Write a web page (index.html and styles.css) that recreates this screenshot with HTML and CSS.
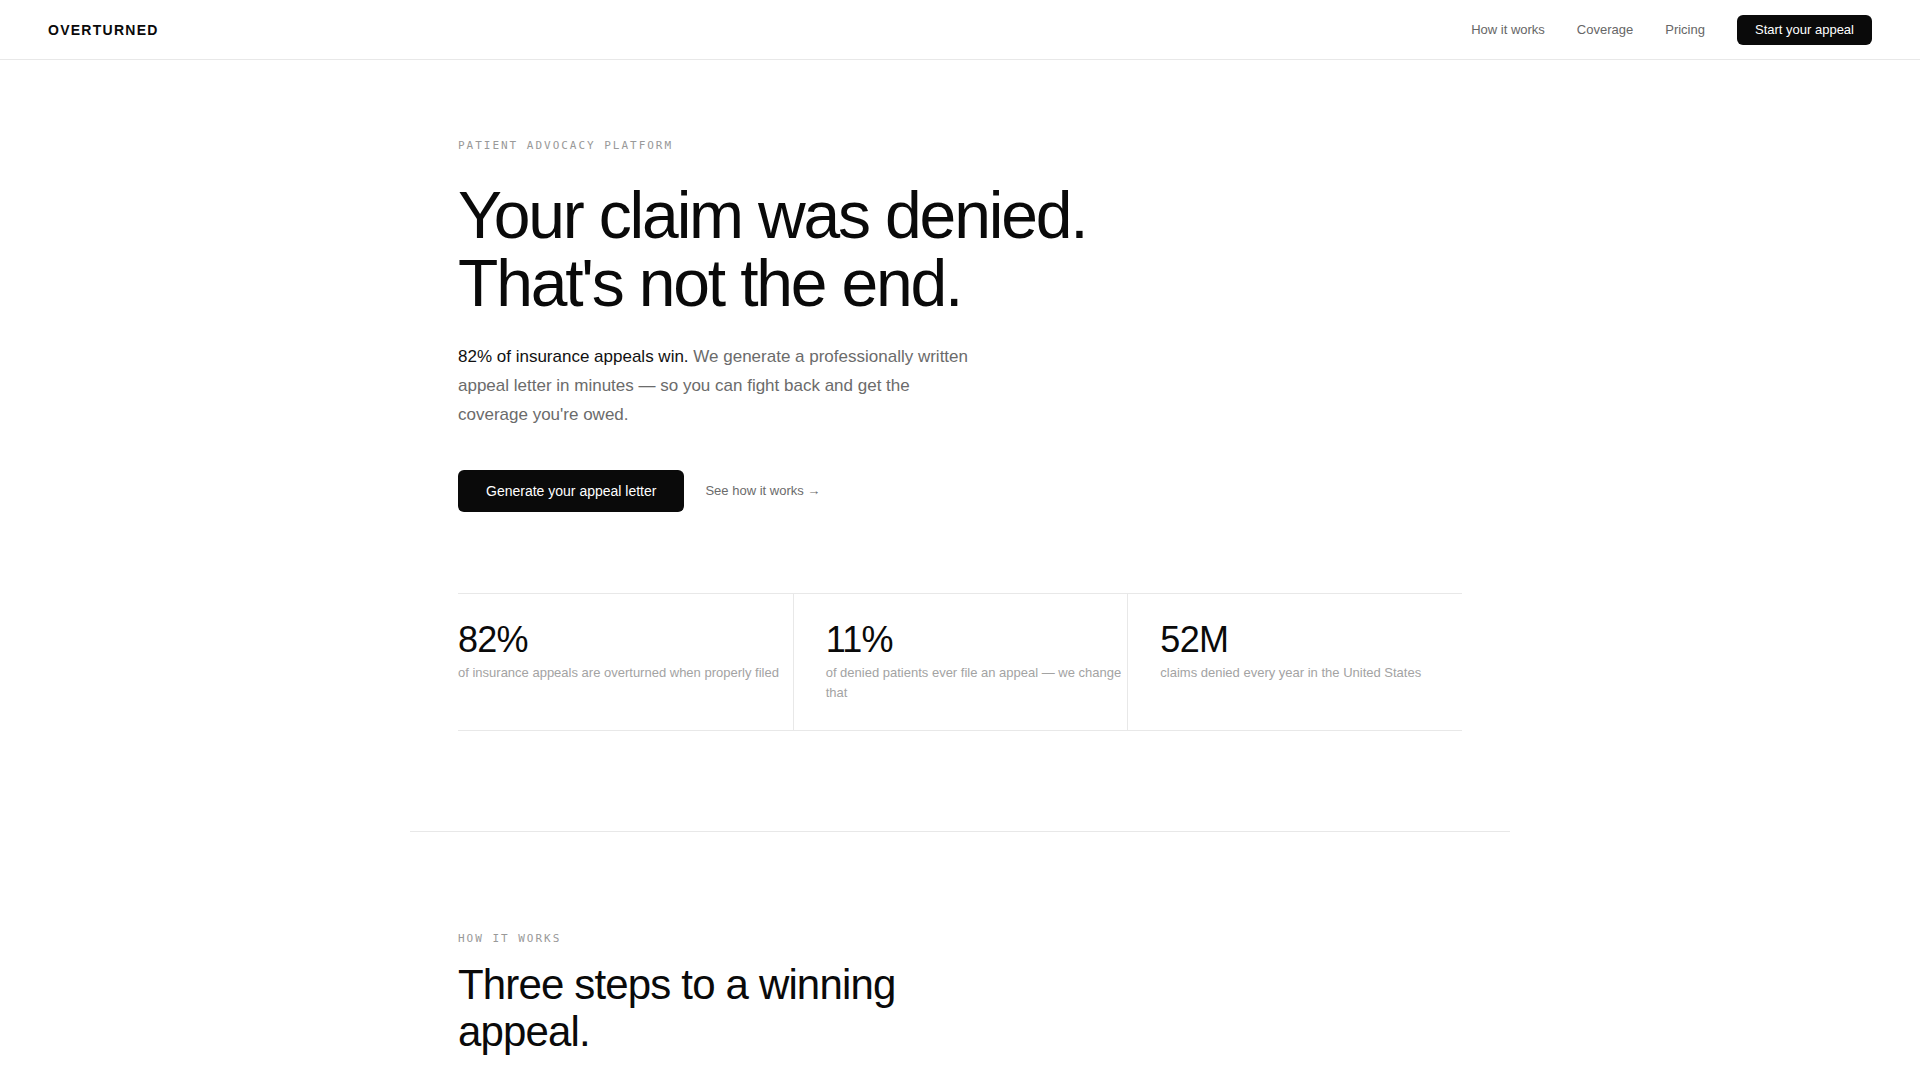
FILE: index.html
```html
<!DOCTYPE html>
<html lang="en">
<head>
<meta charset="utf-8">
<title>Overturned — Patient advocacy platform</title>
<link rel="stylesheet" href="styles.css">
</head>
<body>
<header class="nav">
  <a class="logo" href="#">OVERTURNED</a>
  <nav class="nav-links">
    <a href="#how">How it works</a>
    <a href="#coverage">Coverage</a>
    <a href="#pricing">Pricing</a>
    <a class="nav-cta" href="#start">Start your appeal</a>
  </nav>
</header>

<main>
  <section class="hero">
    <p class="eyebrow">PATIENT ADVOCACY PLATFORM</p>
    <h1 class="hero-title">Your claim was denied.<br>That's not the end.</h1>
    <p class="hero-lead"><span class="lead-strong">82% of insurance appeals win.</span> We generate a professionally written appeal letter in minutes — so you can fight back and get the coverage you're owed.</p>
    <div class="hero-actions">
      <a class="btn-primary" href="#start">Generate your appeal letter</a>
      <a class="link-secondary" href="#how">See how it works →</a>
    </div>
    <div class="stats">
      <div class="stat">
        <div class="stat-num">82%</div>
        <div class="stat-label">of insurance appeals are overturned when properly filed</div>
      </div>
      <div class="stat">
        <div class="stat-num">11%</div>
        <div class="stat-label">of denied patients ever file an appeal — we change that</div>
      </div>
      <div class="stat">
        <div class="stat-num">52M</div>
        <div class="stat-label">claims denied every year in the United States</div>
      </div>
    </div>
  </section>

  <section class="section" id="how">
    <p class="eyebrow eyebrow-tight">HOW IT WORKS</p>
    <h2 class="section-title">Three steps to a winning appeal.</h2>
    <div class="steps">
      <div class="step">
        <div class="step-num">01</div>
        <h3 class="step-title">Tell us what was denied</h3>
        <p class="step-text">Answer a few questions about your claim and the reason your insurer gave.</p>
      </div>
      <div class="step">
        <div class="step-num">02</div>
        <h3 class="step-title">We draft your letter</h3>
        <p class="step-text">A professionally written appeal citing your policy and medical necessity.</p>
      </div>
      <div class="step">
        <div class="step-num">03</div>
        <h3 class="step-title">Send it and get paid</h3>
        <p class="step-text">Submit the letter to your insurer and track your appeal to resolution.</p>
      </div>
    </div>
  </section>
</main>
</body>
</html>
```

FILE: styles.css
```css
* {
  box-sizing: border-box;
}

html, body {
  margin: 0;
  padding: 0;
  background: #ffffff;
}

body {
  font-family: "Liberation Sans", Arial, sans-serif;
  color: #0a0a0a;
  -webkit-font-smoothing: antialiased;
}

a {
  text-decoration: none;
  color: inherit;
}

p, h1, h2, h3 {
  margin: 0;
}

/* NAV */
.nav {
  height: 60px;
  padding: 0 48px;
  border-bottom: 1px solid #e8e8e8;
  display: flex;
  align-items: center;
  justify-content: space-between;
}

.logo {
  font-size: 14px;
  font-weight: 700;
  letter-spacing: 0.09em;
  color: #0a0a0a;
}

.nav-links {
  display: flex;
  align-items: center;
  gap: 32px;
  font-size: 13px;
}

.nav-links a {
  color: #666666;
  line-height: 16px;
}

.nav-links a.nav-cta {
  background: #0a0a0a;
  color: #ffffff;
  padding: 7px 18px;
  border-radius: 6px;
}

/* HERO */
.hero {
  max-width: 1100px;
  margin: 0 auto;
  padding: 78px 48px 100px;
}

.eyebrow {
  font-family: "DejaVu Sans Mono", "Liberation Mono", monospace;
  font-size: 11px;
  line-height: 16px;
  letter-spacing: 0.18em;
  color: #999999;
  margin-bottom: 27px;
}

.eyebrow-tight {
  margin-bottom: 14px;
}

.hero-title {
  font-size: 66px;
  line-height: 68px;
  font-weight: 400;
  letter-spacing: -0.033em;
  color: #0a0a0a;
}

.hero-lead {
  margin-top: 26px;
  max-width: 520px;
  font-size: 17px;
  line-height: 1.7;
  color: #6b6b6b;
}

.lead-strong {
  color: #111111;
}

.hero-actions {
  margin-top: 40px;
  display: flex;
  align-items: center;
  gap: 21px;
}

.btn-primary {
  display: inline-block;
  background: #0a0a0a;
  color: #ffffff;
  font-size: 14px;
  line-height: 16px;
  padding: 13px 28px;
  border-radius: 6px;
}

.link-secondary {
  font-size: 13px;
  color: #6b6b6b;
}

/* STATS */
.stats {
  margin-top: 81px;
  display: grid;
  grid-template-columns: repeat(3, 1fr);
  border-top: 1px solid #e8e8e8;
  border-bottom: 1px solid #e8e8e8;
}

.stat {
  padding: 28px 0 27px 32px;
  border-left: 1px solid #e8e8e8;
}

.stat:first-child {
  padding-left: 0;
  border-left: none;
}

.stat-num {
  font-size: 36px;
  line-height: 36px;
  letter-spacing: -0.02em;
  color: #0a0a0a;
}

.stat-label {
  margin-top: 5px;
  font-size: 13px;
  line-height: 20px;
  color: #a3a3a3;
}

/* SECTION */
.section {
  max-width: 1100px;
  margin: 0 auto;
  padding: 99px 48px 100px;
  border-top: 1px solid #e8e8e8;
}

.section-title {
  max-width: 520px;
  font-size: 42px;
  line-height: 47px;
  font-weight: 400;
  letter-spacing: -0.02em;
  color: #0a0a0a;
}

.steps {
  margin-top: 64px;
  display: grid;
  grid-template-columns: repeat(3, 1fr);
  gap: 32px;
}

.step-num {
  font-family: "DejaVu Sans Mono", "Liberation Mono", monospace;
  font-size: 11px;
  letter-spacing: 0.18em;
  color: #999999;
}

.step-title {
  margin-top: 16px;
  font-size: 18px;
  font-weight: 400;
}

.step-text {
  margin-top: 8px;
  font-size: 14px;
  line-height: 1.6;
  color: #6b6b6b;
}
```
